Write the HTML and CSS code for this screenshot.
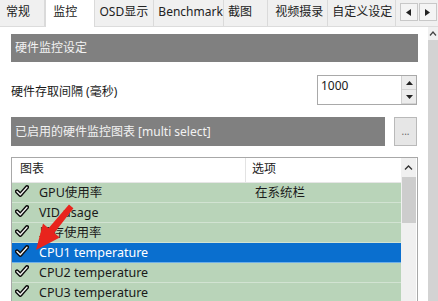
FILE: index.html
```html
<!DOCTYPE html>
<html lang="zh">
<head>
<meta charset="utf-8">
<link rel="stylesheet" href="styles.css">
</head>
<body>
<div class="tabs">
  <div class="tab t1">常规</div>
  <div class="tab t2 active">监控</div>
  <div class="tab t3">OSD显示</div>
  <div class="tab t4">Benchmark</div>
  <div class="tab t5">截图</div>
  <div class="tab t6">视频摄录</div>
  <div class="tab t7">自定义设定</div>
  <div class="tab-arrows">
    <span class="tab-arrow"><svg width="6" height="7" viewBox="0 0 6 7"><path d="M5 0 L0 3.5 L5 7Z" fill="#222"/></svg></span>
    <span class="tab-arrow"><svg width="6" height="7" viewBox="0 0 6 7"><path d="M0 0 L5 3.5 L0 7Z" fill="#222"/></svg></span>
  </div>
</div>
<div class="main">
  <div class="content">
    <div class="section-head first">硬件监控设定</div>
    <div class="field-row">
      <span class="label">硬件存取间隔 (毫秒)</span>
      <div class="spin">
        <span class="spin-val">1000</span>
        <div class="spin-btns">
          <span class="spin-btn"><svg width="7" height="4" viewBox="0 0 7 4"><path d="M0 4 L3.5 0 L7 4Z" fill="#222"/></svg></span>
          <span class="spin-btn"><svg width="7" height="4" viewBox="0 0 7 4"><path d="M0 0 L3.5 4 L7 0Z" fill="#222"/></svg></span>
        </div>
      </div>
    </div>
    <div class="head-row">
      <div class="section-head grow">已启用的硬件监控图表 [multi select]</div>
      <div class="dots">...</div>
    </div>
    <div class="list">
      <div class="list-body">
        <div class="list-head"><div class="c1">图表</div><div class="c2">选项</div></div>
        <div class="row"><div class="c1"><svg class="chk" viewBox="0 0 14 12"><path d="M2 6.5 L5.3 9.8 L12 2.2" class="o"/><path d="M2 6.5 L5.3 9.8 L12 2.2" class="i"/></svg>GPU使用率</div><div class="c2">在系统栏</div></div>
        <div class="row"><div class="c1"><svg class="chk" viewBox="0 0 14 12"><path d="M2 6.5 L5.3 9.8 L12 2.2" class="o"/><path d="M2 6.5 L5.3 9.8 L12 2.2" class="i"/></svg>VID usage</div><div class="c2"></div></div>
        <div class="row"><div class="c1"><svg class="chk" viewBox="0 0 14 12"><path d="M2 6.5 L5.3 9.8 L12 2.2" class="o"/><path d="M2 6.5 L5.3 9.8 L12 2.2" class="i"/></svg>显存使用率</div><div class="c2"></div></div>
        <div class="row sel"><div class="c1"><svg class="chk" viewBox="0 0 14 12"><path d="M2 6.5 L5.3 9.8 L12 2.2" class="o"/><path d="M2 6.5 L5.3 9.8 L12 2.2" class="i"/></svg>CPU1 temperature</div><div class="c2"></div></div>
        <div class="row"><div class="c1"><svg class="chk" viewBox="0 0 14 12"><path d="M2 6.5 L5.3 9.8 L12 2.2" class="o"/><path d="M2 6.5 L5.3 9.8 L12 2.2" class="i"/></svg>CPU2 temperature</div><div class="c2"></div></div>
        <div class="row"><div class="c1"><svg class="chk" viewBox="0 0 14 12"><path d="M2 6.5 L5.3 9.8 L12 2.2" class="o"/><path d="M2 6.5 L5.3 9.8 L12 2.2" class="i"/></svg>CPU3 temperature</div><div class="c2"></div></div>
      </div>
      <div class="list-scroll">
        <div class="sc-up"><svg width="9" height="5" viewBox="0 0 9 5"><path d="M1 4.5 L4.5 1 L8 4.5" fill="none" stroke="#333" stroke-width="1.3"/></svg></div>
        <div class="sc-thumb"></div>
      </div>
    </div>
  </div>
  <div class="vscroll">
    <div class="vs-up"><svg width="8" height="5" viewBox="0 0 8 5"><path d="M1 4.5 L4 1 L7 4.5" fill="none" stroke="#444" stroke-width="1.2"/></svg></div>
    <div class="vs-thumb"></div>
  </div>
</div>
<svg class="pointer" viewBox="0 0 438 301" width="438" height="301">
  <polygon points="36,250 43,223.6 48.5,228.2 69,204.5 73.4,208.2 54.3,233 59.8,237.6" fill="#e8241d"/>
</svg>
</body>
</html>
```

FILE: styles.css
```css
* { box-sizing: border-box; }
html, body { margin: 0; padding: 0; }
body {
  width: 438px;
  height: 301px;
  overflow: hidden;
  position: relative;
  background: #fff;
  font-family: "Noto Sans", "Noto Sans CJK SC", sans-serif;
  font-size: 12px;
  color: #1a1a1a;
}
.tabs {
  display: flex;
  height: 27px;
  background: #f0f0f0;
  border-bottom: 1px solid #dcdcdc;
}
.tab {
  height: 26px;
  line-height: 24px;
  padding-left: 5px;
  border-right: 1px solid #dadada;
  white-space: nowrap;
  color: #222;
}
.tab.active {
  background: #fff;
  height: 27px;
  border-left: 1px solid #dadada;
}
.t1 { width: 46px; padding-left: 6px; }
.t2 { width: 51px; padding-left: 7px; }
.t3 { width: 60px; padding-left: 4px; }
.t4 { width: 71px; padding-left: 4px; }
.t5 { width: 45px; padding-left: 4px; }
.t6 { width: 61px; padding-left: 7px; }
.t7 { width: 69px; padding-left: 4px; }
.tab-arrows {
  display: flex;
  margin-left: 4px;
  padding-top: 3px;
}
.tab-arrow {
  width: 18px;
  height: 18px;
  border: 1px solid #c8c8c8;
  background: #f4f4f4;
  display: flex;
  align-items: center;
  justify-content: center;
  margin-right: 1px;
}
.main {
  display: flex;
  height: 274px;
}
.content {
  width: 428px;
  padding: 0 10px 0 11px;
  display: flex;
  flex-direction: column;
}
.section-head {
  background: #808080;
  color: #f2f2f2;
  height: 28px;
  line-height: 28px;
  padding-left: 4px;
  white-space: nowrap;
}
.section-head.first { margin-top: 7px; }
.field-row {
  margin-top: 13px;
  height: 30px;
  display: flex;
  align-items: center;
  justify-content: space-between;
}
.label { padding-top: 2px; }
.spin {
  width: 100px;
  height: 30px;
  border: 1px solid #a9a9a9;
  display: flex;
  margin-right: 1px;
}
.spin-val {
  flex: 1;
  padding-left: 3px;
  line-height: 20px;
}
.spin-btns {
  width: 15px;
  display: flex;
  flex-direction: column;
  border-left: 1px solid #d0d0d0;
}
.spin-btn {
  flex: 1;
  background: #ececec;
  display: flex;
  align-items: center;
  justify-content: center;
  border-bottom: 1px solid #d4d4d4;
}
.head-row {
  margin-top: 12px;
  height: 29px;
  display: flex;
  gap: 9px;
}
.grow { flex: 1; height: 29px; line-height: 29px; }
.dots {
  width: 23px;
  height: 29px;
  margin-right: 1px;
  border: 1px solid #b9b9b9;
  background: #e6e6e6;
  color: #666;
  font-size: 10px;
  text-align: center;
  line-height: 26px;
}
.list {
  margin-top: 11px;
  flex: 1;
  border: 1px solid #a8a8a8;
  border-bottom: none;
  display: flex;
  overflow: hidden;
}
.list-body { flex: 1; }
.list-head {
  display: flex;
  height: 25px;
  line-height: 22px;
  background: #fff;
  border-bottom: 1px solid #e6e6e6;
}
.list-head .c1 { width: 233px; padding-left: 8px; }
.list-head .c2 { flex: 1; padding-left: 6px; border-left: 1px solid #e3e3e3; }
.row {
  display: flex;
  height: 20px;
  line-height: 19px;
  background: #b9d4b9;
  border-bottom: 1px solid #d2e3d2;
  font-size: 12.5px;
}
.row .c1 {
  width: 233px;
  padding-left: 3px;
  display: flex;
  align-items: center;
}
.row .c2 { flex: 1; padding-left: 10px; }
.row.sel {
  background: #0a6fcf;
  color: #fff;
  border-bottom-color: #6fb0e8;
}
.chk {
  width: 14px;
  height: 12px;
  margin-right: 10px;
  margin-top: -3px;
}
.chk .o { fill: none; stroke: #0d0d0d; stroke-width: 4.2; stroke-linecap: round; stroke-linejoin: round; }
.chk .i { fill: none; stroke: #f4f4f4; stroke-width: 1.3; stroke-linecap: round; stroke-linejoin: round; }
.list-scroll {
  width: 15px;
  margin-right: 1px;
  background: #f0f0f0;
  display: flex;
  flex-direction: column;
  align-items: center;
}
.sc-up {
  height: 19px;
  display: flex;
  align-items: center;
  justify-content: center;
}
.sc-thumb {
  width: 14px;
  height: 46px;
  background: #cdcdcd;
}
.vscroll {
  width: 10px;
  background: #d8d8d8;
  display: flex;
  flex-direction: column;
}
.vs-up {
  height: 13px;
  background: #f0f0f0;
  display: flex;
  align-items: center;
  justify-content: center;
}
.vs-thumb { flex: 1; background: #d3d3d3; }
.pointer {
  position: absolute;
  left: 0;
  top: 0;
  pointer-events: none;
}
```
